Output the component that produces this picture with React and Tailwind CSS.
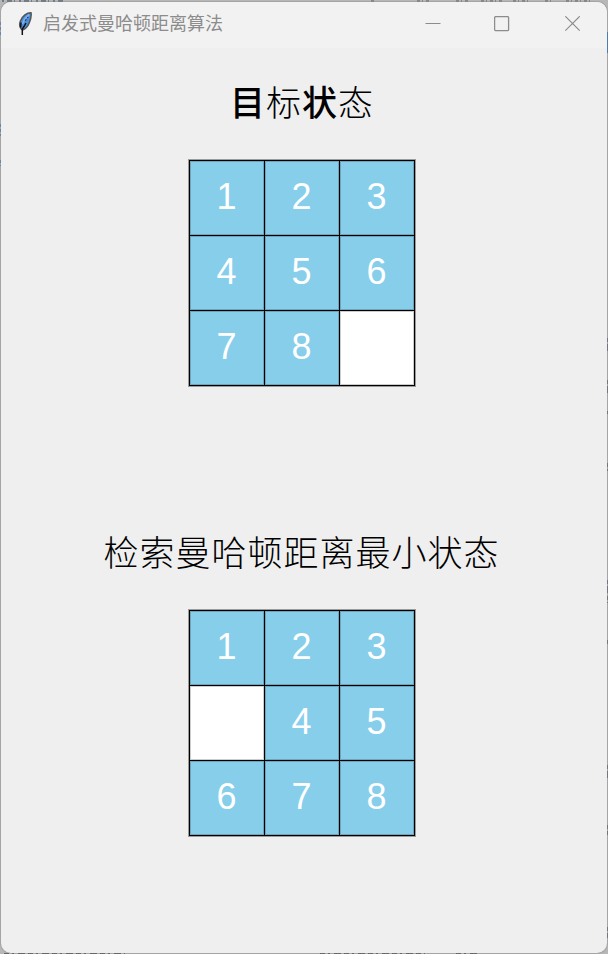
const TARGET = [1, 2, 3, 4, 5, 6, 7, 8, 0];
const FOUND = [1, 2, 3, 0, 4, 5, 6, 7, 8];

// Slivers of the document behind the window that show around its edges.
function Backdrop() {
  return (
    <svg className="pointer-events-none absolute inset-0 h-full w-full" viewBox="0 0 608 954" fill="none">
      <path d="M2 1H65" stroke="#747b82" strokeWidth="2" strokeDasharray="2 3 5 2 1 4" />
      <path d="M371 1H374M417 1H430M456 1H470M481 1H502M513 1H530M545 1H552M566 1H592" stroke="#85878a" strokeWidth="2" strokeDasharray="3 2 1 3" />
      <path d="M4 953.500H125M320 953.500H425M456 953.500H480" stroke="#686868" strokeDasharray="5 3 2 4 7 3" />
      <path d="M.5 22V37M.5 124V136M.5 160V166" stroke="#6c86a5" strokeDasharray="3 2" />
      <path d="M607.500 32V53" stroke="#4d7dae" />
      <path d="M607.500 338V353M607.500 380V394M607.500 411V414M607.500 463V471M607.500 580V603M607.500 640V646M607.500 765V781M607.500 825V835M607.500 927V938" stroke="#77737f" strokeDasharray="4 2 7 3" />
    </svg>
  );
}

function FeatherIcon() {
  return (
    <svg className="mr-[10px] h-6 w-4 shrink-0" viewBox="0 0 16 24" fill="none">
      <path d="M14 .8C10 .6 5.400 4 3.400 9C2.200 12.500 2.500 15 4 16.800L5.400 18C8 17.200 10.800 14.500 12.200 11C13.600 7.500 14.600 3.500 14 .8Z" fill="#4b90dc" stroke="#555555" strokeWidth="1.500" />
      <path d="M12.300 2.500C9.500 4.500 7 7.500 5.500 12" stroke="#7db2ec" strokeWidth="1.600" />
      <path d="M9 11L7 14.500L5.300 17V23M4 10.500L3.700 15.500" stroke="#10141a" strokeWidth="1.500" />
      <path d="M8 8.500L9.500 7.500M10.500 6L11 5" stroke="#1c3455" strokeWidth="1.300" />
    </svg>
  );
}

function TitleBar() {
  return (
    <header className="flex h-[46px] shrink-0 items-start bg-[#f2f2f2] pl-[16px] text-[#8c8c8c]">
      <div className="flex h-[43px] items-center">
        <FeatherIcon />
        <h1 className="text-[18px] leading-6 font-normal whitespace-nowrap">启发式曼哈顿距离算法</h1>
      </div>
      <div className="ml-auto flex h-[43px] items-center pr-[26px]">
        <svg className="mr-[53px] h-4 w-4" viewBox="0 0 16 16" stroke="currentColor"><path d="M.5 7.500H15.500" /></svg>
        <svg className="mr-[55px] h-4 w-4" viewBox="0 0 16 16" fill="none" stroke="currentColor" strokeWidth="1.300"><rect x="0.600" y="0.600" width="14" height="14" rx="1.200" /></svg>
        <svg className="h-4 w-4" viewBox="0 0 16 16" stroke="currentColor" strokeWidth="1.200"><path d="M.3 .3L14.700 14.700M14.700 .3L.3 14.700" /></svg>
      </div>
    </header>
  );
}

function Board({ tiles }) {
  return (
    <div className="grid h-[226px] w-[226px] grid-cols-3 grid-rows-3 gap-px bg-black p-px shadow-[0_0_0_1px_rgba(0,0,0,0.35)]">
      {tiles.map((n) => (
        <div
          key={n}
          className={`flex items-center justify-center pb-[2px] text-[36px] leading-none text-white shadow-[inset_0_0_0_1px_rgba(0,0,0,0.2)] ${n ? "bg-[#87ceeb]" : "bg-white"}`}
        >
          {n ? n : ""}
        </div>
      ))}
    </div>
  );
}

export default function App() {
  return (
    <div className="relative flex h-[954px] w-[608px] flex-col bg-[#b7b7b7] px-px pt-[2px] pb-px font-['Liberation_Sans','Noto_Sans_CJK_SC',sans-serif]">
      <main className="flex flex-1 flex-col overflow-hidden rounded-[10px] bg-[#efefef] shadow-[0_0_0_1px_#a5a5a5]">
        <TitleBar />
        <section className="flex h-[450px] flex-col items-center pt-[32px] pr-[5px]">
          <h2 className="flex h-[48px] items-center pb-px text-[35px] leading-none text-black">
            <span className="w-9 text-center font-medium">目</span>
            <span className="w-9 text-center font-light">标</span>
            <span className="w-9 text-center font-medium">状</span>
            <span className="w-9 text-center font-light">态</span>
          </h2>
          <div className="mt-[32px]"><Board tiles={TARGET} /></div>
        </section>
        <section className="flex h-[450px] flex-col items-center pt-[32px] pr-[5px]">
          <h2 className="flex h-[48px] items-center pb-[2px] text-[35px] leading-none font-light tracking-[1px] whitespace-nowrap text-black">
            检索曼哈顿距离最小状态
          </h2>
          <div className="mt-[32px]"><Board tiles={FOUND} /></div>
        </section>
      </main>
      <Backdrop />
    </div>
  );
}
